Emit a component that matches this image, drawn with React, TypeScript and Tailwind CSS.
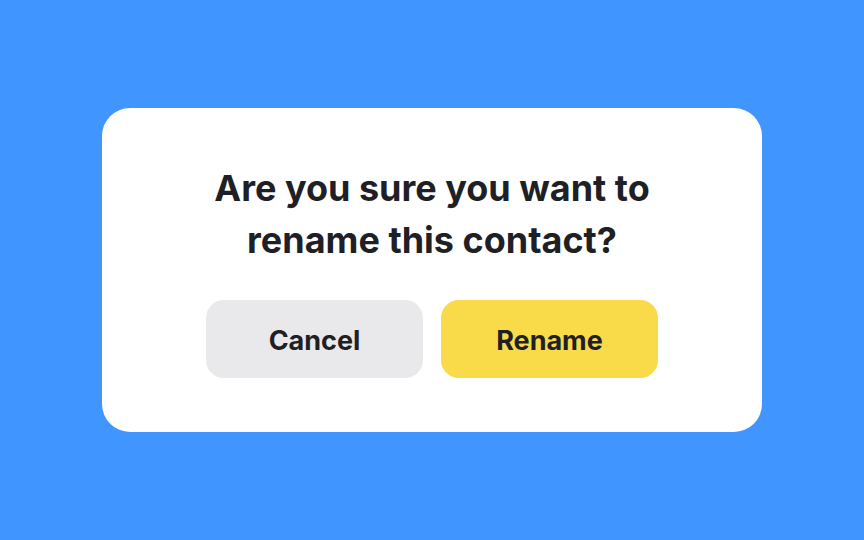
export default function App() {
  return (
    <div className="flex h-[540px] w-[864px] items-center justify-center bg-[#4096fe] font-['Inter',sans-serif]">
      <div className="flex w-[660px] flex-col items-center rounded-[28px] bg-white pt-[54px] pb-[54px]">
        <h1 className="text-center text-[36px] leading-[52px] font-bold text-[#1f1f26]">
          Are you sure you want to
          <br />
          rename this contact?
        </h1>
        <div className="mt-[34px] flex gap-[18px]">
          <button className="h-[78px] w-[217px] rounded-[18px] bg-[#e9e9eb] pt-[4px] text-[27px] font-bold text-[#1f1f26]">
            Cancel
          </button>
          <button className="h-[78px] w-[217px] rounded-[18px] bg-[#f9da48] pt-[4px] text-[27px] font-bold text-[#1f1f26]">
            Rename
          </button>
        </div>
      </div>
    </div>
  );
}
